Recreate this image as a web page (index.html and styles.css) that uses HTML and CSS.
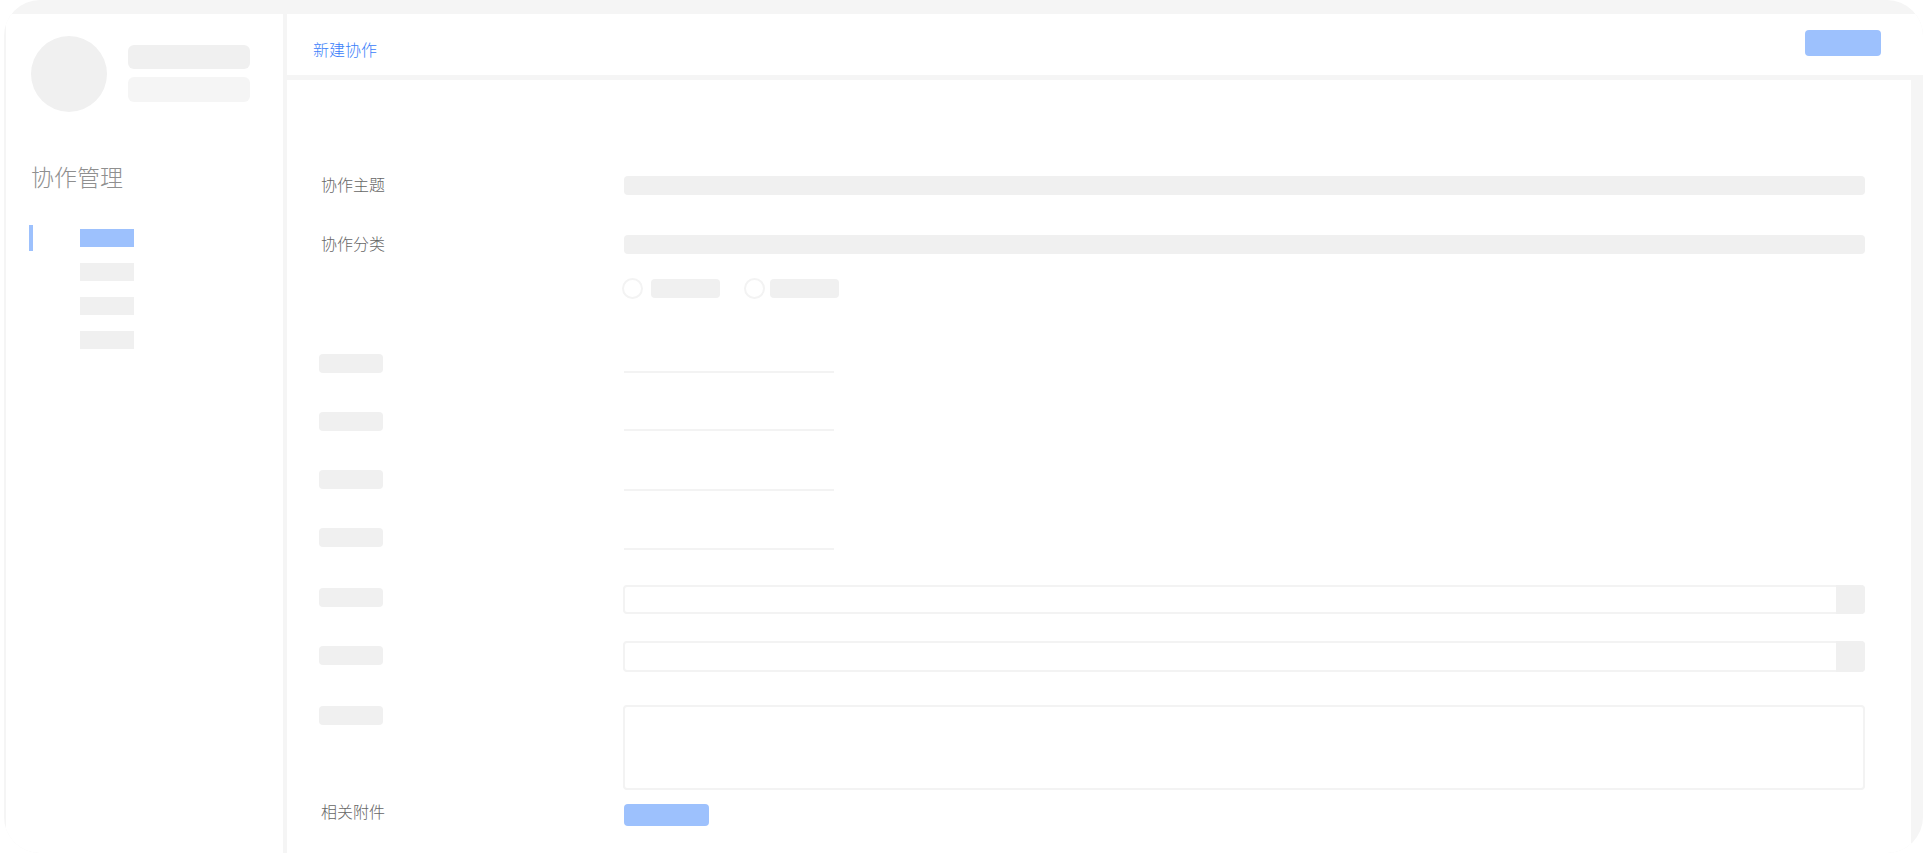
FILE: index.html
```html
<!DOCTYPE html>
<html lang="en">
<head>
    <meta charset="UTF-8">
    <meta name="viewport" content="width=device-width, initial-scale=1.0">
    <title>新建协作</title>
    <link rel="stylesheet" href="styles.css">
</head>
<body>
    <div class="window">
        <!-- Sidebar -->
        <aside class="sidebar">
            <div class="user">
                <div class="avatar"></div>
                <div class="user-lines">
                    <div class="user-line"></div>
                    <div class="user-line light"></div>
                </div>
            </div>
            <h2 class="side-title">协作管理</h2>
            <ul class="side-nav">
                <li class="active"><span></span></li>
                <li><span></span></li>
                <li><span></span></li>
                <li><span></span></li>
            </ul>
        </aside>

        <div class="content">
            <!-- Header -->
            <header class="topbar">
                <span class="page-title">新建协作</span>
                <div class="top-btn"></div>
            </header>

            <!-- Form -->
            <main class="main">
                <div class="row row-subject">
                    <label class="label">协作主题</label>
                    <div class="bar"></div>
                </div>
                <div class="row row-type">
                    <label class="label">协作分类</label>
                    <div class="bar"></div>
                </div>
                <div class="row row-radios">
                    <div class="label"></div>
                    <div class="radios">
                        <span class="radio"></span><span class="radio-text"></span>
                        <span class="radio second"></span><span class="radio-text"></span>
                    </div>
                </div>

                <div class="row row-line first">
                    <div class="label"><div class="ghost"></div></div>
                    <div class="line"></div>
                </div>
                <div class="row row-line">
                    <div class="label"><div class="ghost"></div></div>
                    <div class="line"></div>
                </div>
                <div class="row row-line">
                    <div class="label"><div class="ghost"></div></div>
                    <div class="line"></div>
                </div>
                <div class="row row-line">
                    <div class="label"><div class="ghost"></div></div>
                    <div class="line"></div>
                </div>

                <div class="row row-input first-input">
                    <div class="label"><div class="ghost"></div></div>
                    <div class="input"><div class="addon"></div></div>
                </div>
                <div class="row row-input tall">
                    <div class="label"><div class="ghost"></div></div>
                    <div class="input"><div class="addon"></div></div>
                </div>
                <div class="row row-area">
                    <div class="label"><div class="ghost"></div></div>
                    <div class="textarea"></div>
                </div>
                <div class="row row-files">
                    <label class="label">相关附件</label>
                    <div class="upload-btn"></div>
                </div>
            </main>
        </div>
    </div>
</body>
</html>
```

FILE: styles.css
```css
:root {
    --gray: #f0f0f0;
    --gray-light: #f5f5f5;
    --border: #f3f3f3;
    --blue: #9dc1fd;
}
* {
    margin: 0;
    padding: 0;
    box-sizing: border-box;
}
html, body {
    height: 100%;
    overflow: hidden;
}
body {
    font-family: "Noto Sans CJK SC", "Noto Sans", sans-serif;
    background-color: #fff;
}
.window {
    display: flex;
    height: 853px;
    margin-left: 4px;
    padding-top: 14px;
    padding-left: 2px;
    background-color: var(--gray-light);
    border-radius: 36px;
    overflow: hidden;
}

/* Sidebar */
.sidebar {
    flex: none;
    width: 277px;
    padding: 22px 0 0 25px;
    background-color: #fff;
}
.user {
    display: flex;
    align-items: center;
}
.avatar {
    width: 76px;
    height: 76px;
    border-radius: 50%;
    background-color: var(--gray);
}
.user-lines {
    margin: -2px 0 0 21px;
}
.user-line {
    width: 122px;
    height: 24px;
    border-radius: 6px;
    background-color: var(--gray);
}
.user-line.light {
    height: 25px;
    margin-top: 8px;
    background-color: var(--gray-light);
}
.side-title {
    margin: 48px 0 0;
    font-size: 23px;
    font-weight: 300;
    line-height: 32px;
    color: #8f8f8f;
}
.side-nav {
    margin-top: 37px;
    list-style: none;
}
.side-nav li {
    height: 18px;
    margin-bottom: 16px;
    padding-left: 49px;
}
.side-nav span {
    display: block;
    width: 54px;
    height: 18px;
    background-color: var(--gray);
}
.side-nav .active {
    position: relative;
}
.side-nav .active span {
    background-color: var(--blue);
}
.side-nav .active::before {
    content: "";
    position: absolute;
    top: -4px;
    left: -2px;
    width: 4px;
    height: 26px;
    background-color: var(--blue);
}

/* Right side */
.content {
    flex: 1;
    margin-left: 4px;
    min-width: 0;
}
.topbar {
    display: flex;
    justify-content: space-between;
    align-items: center;
    height: 61px;
    padding: 0 42px 0 26px;
    background-color: #fff;
}
.page-title {
    margin-top: 8px;
    font-size: 16px;
    font-weight: 300;
    color: #3a80fa;
}
.top-btn {
    width: 76px;
    height: 26px;
    margin-bottom: 4px;
    border-radius: 4px;
    background-color: var(--blue);
}
.main {
    width: 1624px;
    height: 773px;
    margin-top: 5px;
    padding: 96px 0 0 32px;
    background-color: #fff;
}

/* Form rows */
.row {
    display: flex;
}
.label {
    flex: none;
    width: 305px;
    font-size: 16px;
    font-weight: 300;
    line-height: 19px;
    color: #666;
}
label.label {
    margin-top: -1px;
    padding-left: 2px;
}
.ghost {
    width: 64px;
    height: 19px;
    border-radius: 4px;
    background-color: var(--gray);
}
.bar {
    width: 1241px;
    height: 19px;
    border-radius: 4px;
    background-color: var(--gray);
}
.row-type {
    margin-top: 40px;
}
.row-radios {
    margin-top: 24px;
}
.radios {
    display: flex;
    align-items: center;
}
.radio {
    width: 21px;
    height: 21px;
    margin-left: -2px;
    border: 2px solid var(--border);
    border-radius: 50%;
}
.radio.second {
    margin-left: 24px;
}
.radio-text {
    width: 69px;
    height: 19px;
    margin-left: 8px;
    border-radius: 4px;
    background-color: var(--gray);
}
.second + .radio-text {
    margin-left: 5px;
}
.row-line {
    height: 39px;
    margin-top: 19px;
}
.row-line.first {
    margin-top: 55px;
}
.line {
    align-self: flex-start;
    width: 210px;
    height: 2px;
    margin-top: 17px;
    background-color: var(--border);
}
.row-line:nth-child(6) .line {
    margin-top: 19px;
}
.row-line:nth-child(7) .line {
    margin-top: 20px;
}
.row-input.first-input {
    margin-top: 18px;
}
.row-input.tall {
    margin-top: 27px;
}
.input {
    position: relative;
    width: 1242px;
    height: 29px;
    margin-left: -1px;
    border: 2px solid var(--border);
    border-radius: 4px;
}
.tall .input {
    height: 31px;
}
.addon {
    position: absolute;
    top: -2px;
    right: -2px;
    bottom: -2px;
    width: 29px;
    background-color: var(--gray);
    border-radius: 0 4px 4px 0;
}
.row-input .ghost {
    margin-top: 3px;
}
.row-input.tall .ghost {
    margin-top: 5px;
}
.row-area {
    margin-top: 33px;
}
.row-area .ghost {
    margin-top: 1px;
}
.textarea {
    width: 1242px;
    height: 85px;
    margin-left: -1px;
    border: 2px solid var(--border);
    border-radius: 4px;
}
.row-files {
    margin-top: 14px;
}
.row-files .label {
    margin-top: -2px;
}
.upload-btn {
    width: 85px;
    height: 22px;
    border-radius: 4px;
    background-color: var(--blue);
}
```
